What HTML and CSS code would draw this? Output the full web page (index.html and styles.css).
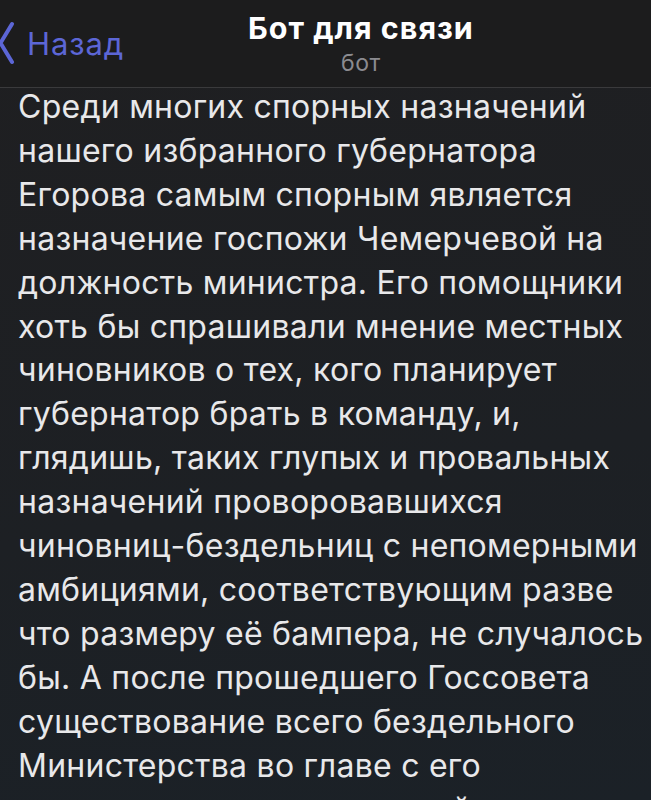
FILE: index.html
```html
<!DOCTYPE html>
<html lang="ru">
<head>
  <meta charset="UTF-8">
  <meta name="viewport" content="width=device-width, initial-scale=1.0">
  <title>Бот для связи</title>
  <link rel="stylesheet" href="styles.css">
</head>
<body>
  <header class="topbar">
    <a class="back" href="#">
      <svg class="chevron" width="16" height="44" viewBox="0 0 16 44">
        <path d="M13 3 L1.5 22 L13 41" fill="none" stroke="#5c66d6" stroke-width="4" stroke-linecap="round" stroke-linejoin="round"/>
      </svg>
      <span>Назад</span>
    </a>
    <div class="chat-title">
      <h1>Бот для связи</h1>
      <span class="subtitle">бот</span>
    </div>
  </header>
  <main class="message">
    <p>
      Среди многих спорных назначений<br>
      нашего избранного губернатора<br>
      Егорова самым спорным является<br>
      назначение госпожи Чемерчевой на<br>
      должность министра. Его помощники<br>
      хоть бы спрашивали мнение местных<br>
      чиновников о тех, кого планирует<br>
      губернатор брать в команду, и,<br>
      глядишь, таких глупых и провальных<br>
      назначений проворовавшихся<br>
      чиновниц-бездельниц с непомерными<br>
      амбициями, соответствующим разве<br>
      что размеру её бампера, не случалось<br>
      бы. А после прошедшего Госсовета<br>
      существование всего бездельного<br>
      Министерства во главе с его<br>
      начальницы-неумехи самой
    </p>
  </main>
</body>
</html>
```

FILE: styles.css
```css
html, body {
  margin: 0;
  padding: 0;
}
body {
  width: 651px;
  height: 800px;
  overflow: hidden;
  font-family: Inter, Roboto, sans-serif;
  background: linear-gradient(170deg, #1f1f21 0%, #1d2024 60%, #1b2127 100%);
}
.topbar {
  height: 87px;
  display: flex;
  align-items: flex-start;
  background-color: #1c1c1d;
  border-bottom: 1px solid #3a3a3c;
}
.back {
  width: 249px;
  display: flex;
  align-items: center;
  gap: 12px;
  margin-top: 21px;
  margin-left: -1px;
  color: #5c66d6;
  text-decoration: none;
  font-size: 31px;
  letter-spacing: 0.9px;
}
.chat-title {
  display: flex;
  flex-direction: column;
  align-items: center;
  margin-top: 10px;
}
.chat-title h1 {
  margin: 0;
  color: #ffffff;
  font-size: 30.5px;
  font-weight: 700;
  line-height: 36px;
  letter-spacing: 1px;
}
.subtitle {
  color: #8b8b90;
  font-size: 23px;
  line-height: 30px;
  margin-top: 2px;
  letter-spacing: 0.5px;
}
.message {
  margin-top: -3px;
  padding-left: 18px;
}
.message p {
  margin: 0;
  color: #e8e8ea;
  font-size: 32px;
  line-height: 43.9px;
  letter-spacing: 0.25px;
  white-space: nowrap;
}
```
